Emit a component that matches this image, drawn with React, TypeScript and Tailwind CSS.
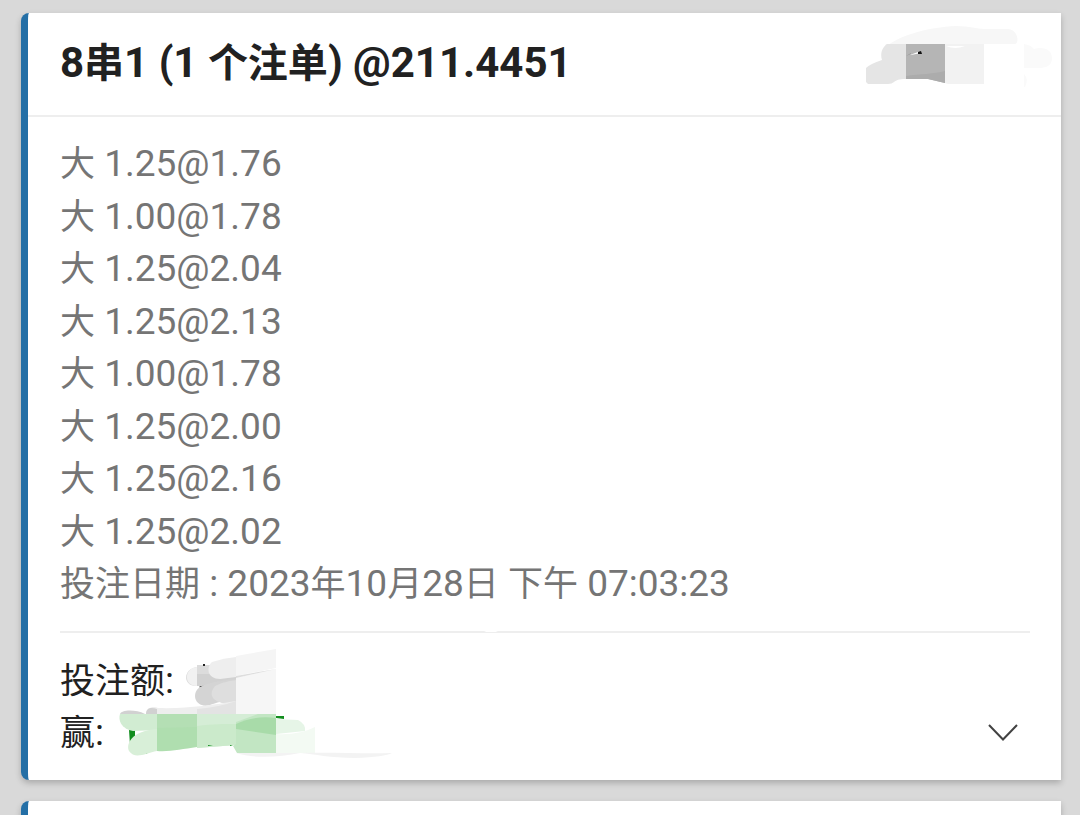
import React from "react";

const selections = [
  "大 1.25@1.76",
  "大 1.00@1.78",
  "大 1.25@2.04",
  "大 1.25@2.13",
  "大 1.00@1.78",
  "大 1.25@2.00",
  "大 1.25@2.16",
  "大 1.25@2.02",
];

/** Sets Latin runs slightly larger than the surrounding Chinese text. */
function MixedText({ text, latin }: { text: string; latin: string }) {
  return (
    <>
      {text.split(/([\x20-\x7e]+)/).map((run, i) =>
        i % 2 === 1 ? (
          <span key={i} className={latin}>
            {run}
          </span>
        ) : (
          run
        ),
      )}
    </>
  );
}

const bodyLatin = "text-[37px] leading-none";

/** Brush and mosaic marks that hide the ticket number. */
function TicketMask() {
  return (
    <svg className="h-[62px] w-[188px] shrink-0" viewBox="866 26 188 62" aria-hidden="true">
      <path d="M880 54C890 36 930 27 956 26C970 26 977 29 984 29H1008C1019 30 1019 44 1015 44H886Z" fill="#f7f7f7" />
      <path d="M887 44H906V79C898 79 897 80 894 82Q892 84 888 84H868L866 82V68Q870 64 882 60C880 53 882 48 887 44Z" fill="#e5e5e5" />
      <path d="M906 44H945V83L928 79H906Z" fill="#b5b5b5" />
      <path d="M906 76C920 74 934 74 945 71V83L928 79H906Z" fill="#acacac" />
      <path d="M945 44H984V84H948L945 83Z" fill="#f2f2f2" />
      <path d="M946 46H965Q955 50 946 46Z" fill="#fff" />
      <path d="M910 55L918 52L921 53L911 55Z" fill="#fff" />
      <path d="M918 52L921 51L922 54H918Z" fill="#111" />
      <path d="M906 56L911 53V54Z" fill="#999" />
      <path d="M1024 44Q1031 45 1034 49C1044 46 1052 50 1052 58C1052 66 1046 68 1038 68H1024Z" fill="#fafafa" />
      <path d="M1024 74Q1029 79 1025 87H1024Z" fill="#fafafa" />
    </svg>
  );
}

/** Brush and mosaic marks that hide the stake and the winnings. */
function AmountMask() {
  return (
    <svg
      className="absolute top-[-6px] left-[59px] h-[110px] w-[276px] overflow-visible"
      viewBox="119 650 276 110"
      aria-hidden="true"
    >
      <path d="M484 632Q491 628 498 632Z" fill="#fff" />
      <path d="M197 665H212V686H197C183 687 182 669 197 667Z" fill="#dcdcdc" />
      <path d="M197 667C184 668 183 686 197 686Z" fill="#f1f1f1" />
      <path d="M203 664H205V666H203ZM199 687L202 685L204 686L201 688Z" fill="#222" />
      <path d="M197 674H236V680L202 686H197Z" fill="#d1d1d1" />
      <path d="M200 687C210 682 225 680 236 679V700C225 700 215 703 210 705C196 709 190 694 200 687Z" fill="#d4d4d4" />
      <path d="M215 686C223 682 230 681 236 680V703C219 706 205 698 215 686Z" fill="#dedede" />
      <path d="M236 656L276 649V668L236 676Z" fill="#f5f5f5" />
      <path d="M212 662Q224 658 236 657V677L220 679C207 679 206 667 212 662Z" fill="#eee" />
      <path d="M236 678L276 669V714H236Z" fill="#f6f6f6" />
      <path d="M236 676L276 669L236 678Z" fill="#ddd" />
      <path d="M146 714C146 707 154 706 158 708C185 709 213 705 236 701V714Z" fill="#eee" />
      <path d="M146 714C146 708 151 707 157 709V714Z" fill="#d1d1d1" />
      <path d="M197 709Q220 707 236 701V714H197Z" fill="#e3e3e3" />
      <path d="M120 714C121 710 135 709 145 714Z" fill="#d1d1d1" />
      <path d="M129 730H135V740L130 745ZM145 752H149L146 754ZM266 716H284V719L276 718Z" fill="#128d1e" />
      <path d="M120 714H157V730L133 731C121 729 118 720 120 714Z" fill="#d1ecd2" />
      <path d="M157 714H197V747C182 749 170 752 157 751Z" fill="#afdeaf" />
      <path d="M157 728L197 727V714H157Z" fill="#b4dfb4" />
      <path d="M157 729C130 731 126 745 129 751C135 760 146 753 157 751Z" fill="#d8efd8" />
      <path d="M197 714H236V745L197 748Z" fill="#d5edd6" />
      <path d="M197 726C214 724 224 724 236 724V745L197 748Z" fill="#cbeacb" />
      <path d="M208 745H213L208 746ZM230 745H233L230 746Z" fill="#128d1e" />
      <path d="M236 714H276V753H237L233 746L236 744Z" fill="#c2e6c3" />
      <path d="M236 724C248 718 262 716 276 718V735L236 729Z" fill="#a8dba9" />
      <path d="M236 714H258L236 722Z" fill="#d5edd6" />
      <path d="M276 719L298 720Q306 724 305 731L276 734Z" fill="#e6f5e7" />
      <path d="M276 734C292 735 305 732 315 727V753H276Z" fill="#f3faf3" />
      <path d="M236 753H300C335 752 362 754 392 753Q385 757 355 758C330 758 315 754 300 753C280 757 254 759 236 753Z" fill="#f3f3f3" />
    </svg>
  );
}

function Card({ children }: { children?: React.ReactNode }) {
  return (
    <article className="rounded-l-lg border-l-[7px] border-[#246fa6] bg-white shadow-[0_3px_6px_rgba(0,0,0,0.22)]">
      {children}
    </article>
  );
}

export default function App() {
  return (
    <main className="flex h-screen flex-col gap-[21px] overflow-hidden bg-[#d9d9d9] pt-[13px] pr-[19px] pl-[21px] font-['Roboto','Noto_Sans_CJK_SC',sans-serif]">
      <Card>
        <header className="flex h-[104px] items-start justify-between border-b-2 border-[#eeeeee] pt-[13px] pr-[7px] pl-8">
          <h1 className="pt-2 text-[40px] leading-[60px] font-bold whitespace-nowrap text-[#212121]">
            <MixedText text="8串1 (1 个注单) @211.4451" latin="text-[42px] leading-none" />
          </h1>
          <TicketMask />
        </header>
        <div className="pt-[22px] pr-[31px] pb-[19px] pl-8 text-[35px] leading-normal">
          <ul className="text-[#757575]">
            {selections.map((s, i) => (
              <li key={i}>
                <MixedText text={s} latin={bodyLatin} />
              </li>
            ))}
          </ul>
          <p className="text-[#757575]">
            <MixedText text="投注日期 : 2023年10月28日 下午 07:03:23" latin={bodyLatin} />
          </p>
          <hr className="mt-[19px] mb-[23px] border-t-2 border-[#eeeeee]" />
          <div className="relative flex items-end justify-between text-[#212121]">
            <dl>
              <dt>
                <MixedText text="投注额:" latin={bodyLatin} />
              </dt>
              <dt>
                <MixedText text="赢:" latin={bodyLatin} />
              </dt>
            </dl>
            <AmountMask />
            <button type="button" aria-label="展开" className="mr-3 mb-[19px]">
              <svg className="h-[18px] w-[30px]" viewBox="0 0 30 18" fill="none" stroke="#424242" strokeWidth="2">
                <path d="M1 1L15 15.5L29 1" />
              </svg>
            </button>
          </div>
        </div>
      </Card>
      <Card>
        <div className="h-[104px]" />
      </Card>
    </main>
  );
}
